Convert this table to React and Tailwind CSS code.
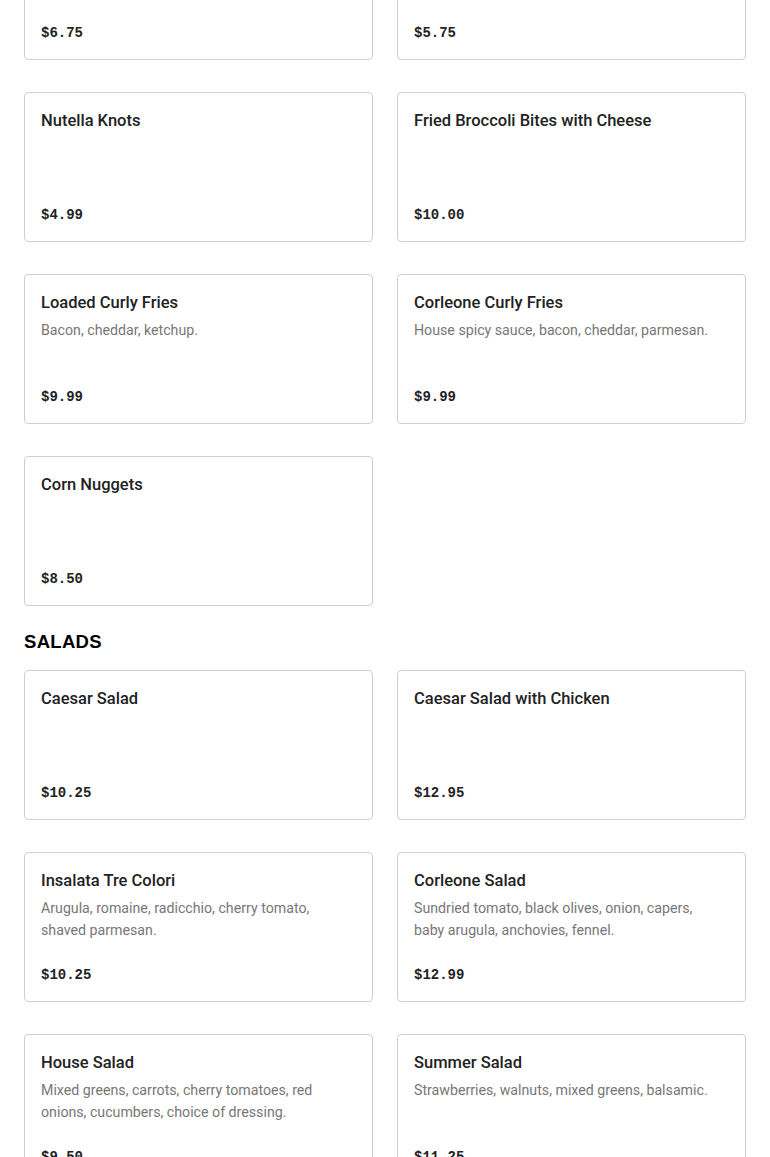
import React from "react";

const sides = [
  { name: "", desc: "", price: "$6.75" },
  { name: "", desc: "", price: "$5.75" },
  { name: "Nutella Knots", desc: "", price: "$4.99" },
  { name: "Fried Broccoli Bites with Cheese", desc: "", price: "$10.00" },
  { name: "Loaded Curly Fries", desc: "Bacon, cheddar, ketchup.", price: "$9.99" },
  { name: "Corleone Curly Fries", desc: "House spicy sauce, bacon, cheddar, parmesan.", price: "$9.99" },
  { name: "Corn Nuggets", desc: "", price: "$8.50" },
];

const salads = [
  { name: "Caesar Salad", desc: "", price: "$10.25" },
  { name: "Caesar Salad with Chicken", desc: "", price: "$12.95" },
  { name: "Insalata Tre Colori", desc: "Arugula, romaine, radicchio, cherry tomato, shaved parmesan.", price: "$10.25" },
  { name: "Corleone Salad", desc: "Sundried tomato, black olives, onion, capers, baby arugula, anchovies, fennel.", price: "$12.99" },
  { name: "House Salad", desc: "Mixed greens, carrots, cherry tomatoes, red onions, cucumbers, choice of dressing.", price: "$9.50" },
  { name: "Summer Salad", desc: "Strawberries, walnuts, mixed greens, balsamic.", price: "$11.25" },
];

const MenuCard = ({ item }) => (
  <div className="h-[150px] border border-[#cfcfcf] rounded-[4px] bg-white p-4 flex flex-col">
    {item.name && (
      <h3 className="text-[16.5px] leading-6 font-medium text-[#222] font-['Roboto','Liberation_Sans',sans-serif]">
        {item.name}
      </h3>
    )}
    {item.desc && (
      <p className="mt-1 pr-2 text-[14.2px] leading-[22px] text-[#777] font-['Roboto','Liberation_Sans',sans-serif]">
        {item.desc}
      </p>
    )}
    <div className="mt-auto text-[14px] leading-[20px] font-bold text-[#222] font-['Liberation_Mono','Courier_New',monospace]">
      {item.price}
    </div>
  </div>
);

export default function App() {
  return (
    <div className="w-[770px] h-[1157px] overflow-hidden bg-white">
      <div className="px-6 -mt-[90px]">
        <div className="grid grid-cols-2 gap-x-6 gap-y-8">
          {sides.map((item, i) => (
            <MenuCard key={i} item={item} />
          ))}
        </div>

        <h2 className="mt-6 mb-4 text-[18.5px] leading-6 font-black tracking-[0.3px] text-black font-['Liberation_Sans',Arial,sans-serif]">
          SALADS
        </h2>

        <div className="grid grid-cols-2 gap-x-6 gap-y-8">
          {salads.map((item, i) => (
            <MenuCard key={i} item={item} />
          ))}
        </div>
      </div>
    </div>
  );
}
